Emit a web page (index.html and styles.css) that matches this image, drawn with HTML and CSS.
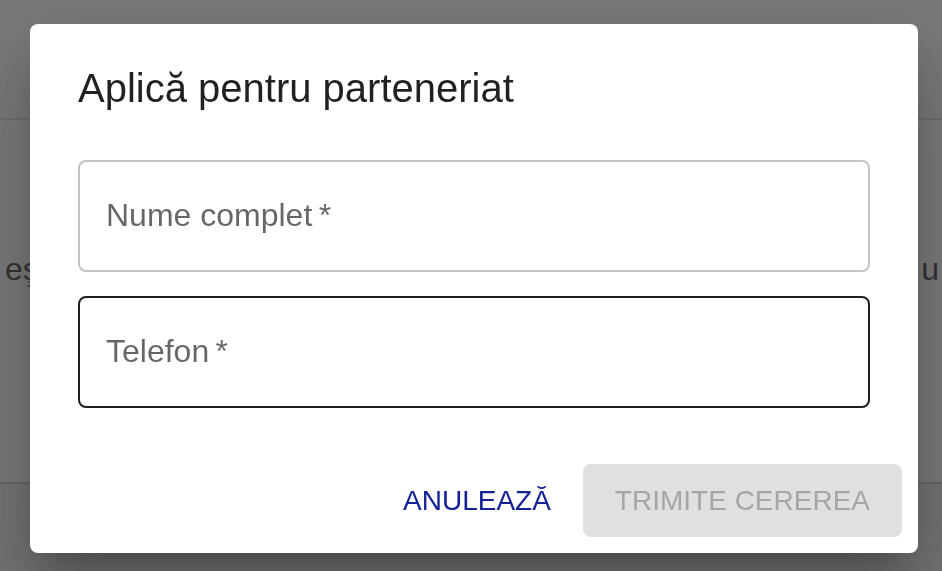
FILE: index.html
```html
<!DOCTYPE html>
<html lang="ro">
<head>
<meta charset="utf-8">
<title>Aplică pentru parteneriat</title>
<link rel="stylesheet" href="styles.css">
</head>
<body>
<div class="page">
  <header class="page-header"></header>
  <main class="page-main">
    <p class="page-text"><span>eş</span><span>u</span></p>
  </main>
  <footer class="page-footer"></footer>
</div>
<div class="backdrop">
  <div class="dialog" role="dialog" aria-labelledby="dlg-title">
    <h2 class="dialog-title" id="dlg-title">Aplică pentru parteneriat</h2>
    <div class="dialog-content">
      <div class="field">
        <span class="field-label">Nume complet&thinsp;*</span>
      </div>
      <div class="field field-hover">
        <span class="field-label">Telefon&thinsp;*</span>
      </div>
    </div>
    <div class="dialog-actions">
      <button class="btn btn-text" type="button">ANULEAZĂ</button>
      <button class="btn btn-disabled" type="button" disabled>TRIMITE CEREREA</button>
    </div>
  </div>
</div>
</body>
</html>
```

FILE: styles.css
```css
* { box-sizing: border-box; }

html, body {
  margin: 0;
  padding: 0;
  width: 942px;
  height: 571px;
  overflow: hidden;
  font-family: "Liberation Sans", Arial, sans-serif;
}

.page {
  width: 942px;
  height: 571px;
  display: flex;
  flex-direction: column;
  background: #f3f3f3;
}

.page-header {
  height: 120px;
  flex: none;
  border-bottom: 2px solid #dcdcdc;
  background: #f1f1f1;
}

.page-main {
  height: 362px;
  flex: none;
  display: flex;
  flex-direction: column;
  justify-content: center;
}

.page-text {
  margin: 0;
  padding: 0 3px 0 5px;
  display: flex;
  justify-content: space-between;
  font-size: 32px;
  line-height: 40px;
  color: #666;
  position: relative;
  top: -32px;
}

.page-footer {
  flex: 1;
  border-top: 2px solid #cfcfcf;
  background: #e6e6e6;
}

.backdrop {
  position: fixed;
  inset: 0;
  background: rgba(0, 0, 0, 0.5);
  display: flex;
  align-items: flex-start;
  padding: 24px 0 0 30px;
}

.dialog {
  width: 888px;
  background: #fff;
  border-radius: 8px;
  box-shadow:
    0 22px 70px 8px rgba(0, 0, 0, 0.12),
    0 48px 76px 6px rgba(0, 0, 0, 0.14),
    0 22px 30px -14px rgba(0, 0, 0, 0.2);
  display: flex;
  flex-direction: column;
}

.dialog-title {
  margin: 0;
  padding: 32px 48px 0;
  font-size: 40px;
  line-height: 64px;
  font-weight: 400;
  color: rgba(0, 0, 0, 0.87);
}

.dialog-content {
  padding: 40px 48px 40px;
  display: flex;
  flex-direction: column;
  gap: 24px;
}

.field {
  height: 112px;
  border: 2px solid #c4c4c4;
  border-radius: 8px;
  padding: 30px 0 0 26px;
}

.field-hover {
  border-color: #1f1f1f;
}

.field-label {
  display: block;
  font-size: 32px;
  line-height: 46px;
  color: rgba(0, 0, 0, 0.6);
}

.dialog-actions {
  padding: 16px;
  display: flex;
  justify-content: flex-end;
  align-items: center;
  gap: 16px;
}

.btn {
  font-family: inherit;
  font-size: 28px;
  line-height: 49px;
  font-weight: 400;
  border: 0;
  border-radius: 8px;
  padding: 12px 32px;
  background: transparent;
  cursor: pointer;
}

.btn-text {
  padding: 12px 16px;
  color: #162396;
}

.btn-disabled {
  background: #e0e0e0;
  color: #a6a6a6;
  cursor: default;
}
```
